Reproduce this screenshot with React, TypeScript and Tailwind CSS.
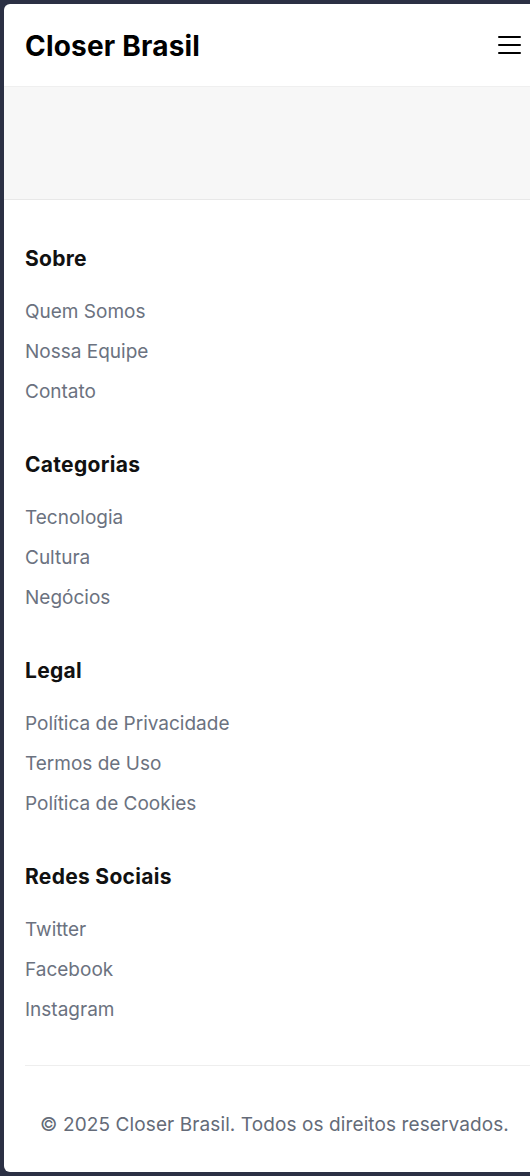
const sections = [
  { title: "Sobre", links: ["Quem Somos", "Nossa Equipe", "Contato"] },
  { title: "Categorias", links: ["Tecnologia", "Cultura", "Negócios"] },
  {
    title: "Legal",
    links: ["Política de Privacidade", "Termos de Uso", "Política de Cookies"],
  },
  { title: "Redes Sociais", links: ["Twitter", "Facebook", "Instagram"] },
];

export default function App() {
  return (
    <div
      className="min-h-[1176px] bg-[#2b3044] pt-[4px] pl-[4px] pb-[4px]"
      style={{ fontFamily: "Inter, 'Noto Sans', sans-serif" }}
    >
      <div className="bg-white rounded-l-[6px] overflow-hidden h-[1168px] flex flex-col">
        <header className="h-[82px] flex items-center justify-between pl-[21px] pr-[8px] shrink-0">
          <h1 className="text-[28px] font-bold text-black tracking-[0.2px] pt-[1px]">
            Closer Brasil
          </h1>
          <button className="w-[24px] h-[24px] flex flex-col justify-center gap-[6px]">
            <span className="block h-[2px] w-[23px] bg-black rounded" />
            <span className="block h-[2px] w-[23px] bg-black rounded" />
            <span className="block h-[2px] w-[23px] bg-black rounded" />
          </button>
        </header>

        <div className="h-[114px] bg-[#f7f7f7] border-t border-[#efefef] border-b border-b-[#e8e8e8] shrink-0" />

        <footer className="pl-[21px] pt-[45px] flex flex-col">
          <div className="flex flex-col gap-[45px]">
            {sections.map((s) => (
              <div key={s.title}>
                <h3 className="text-[21px] leading-[28px] font-bold text-[#111] tracking-[0.3px]">
                  {s.title}
                </h3>
                <ul className="mt-[25px] flex flex-col gap-[12px]">
                  {s.links.map((l) => (
                    <li
                      key={l}
                      className="text-[19px] leading-[28px] text-[#6b7280]"
                    >
                      {l}
                    </li>
                  ))}
                </ul>
              </div>
            ))}
          </div>

          <div className="mt-[41px] border-t border-[#eeeeee] pt-[45px] pr-[6px]">
            <p className="text-[19px] leading-[28px] text-[#646b78] text-center tracking-[0.1px]">
              © 2025 Closer Brasil. Todos os direitos reservados.
            </p>
          </div>
        </footer>
      </div>
    </div>
  );
}
